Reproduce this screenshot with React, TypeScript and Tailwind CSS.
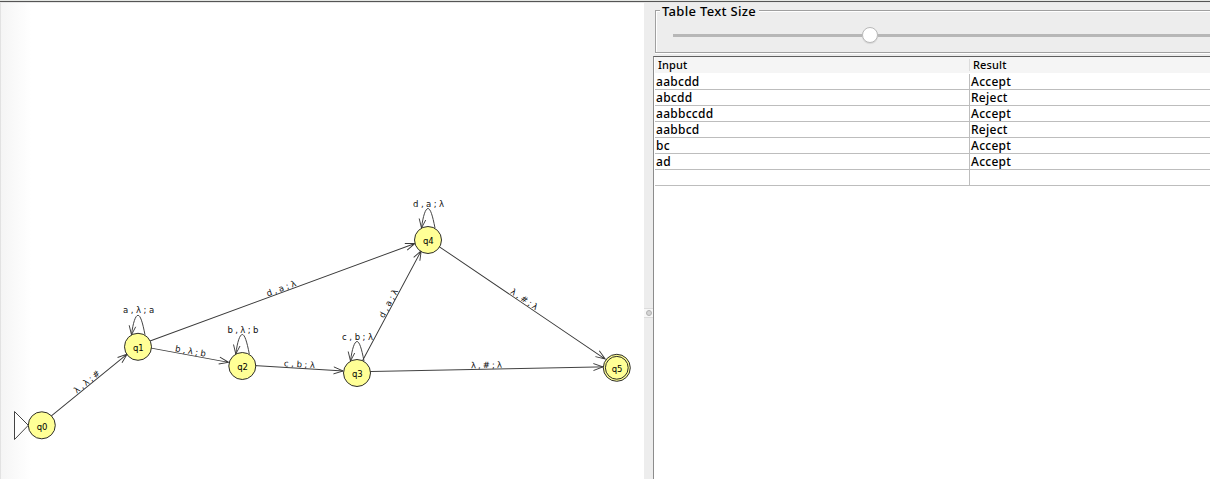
type Point = { x: number; y: number };
type StateNode = Point & { name: string; final?: boolean; loop?: string };

const R = 13.5;

const states: Record<string, StateNode> = {
  q0: { name: "q0", x: 41.8, y: 425.3 },
  q1: { name: "q1", x: 138, y: 346.8, loop: "a , λ ; a" },
  q2: { name: "q2", x: 242.3, y: 366, loop: "b , λ ; b" },
  q3: { name: "q3", x: 357, y: 373, loop: "c , b ; λ" },
  q4: { name: "q4", x: 428, y: 240, loop: "d , a ; λ" },
  q5: { name: "q5", x: 616.8, y: 367.8, final: true },
};

const edges = [
  { from: "q0", to: "q1", label: "λ , λ ; #" },
  { from: "q1", to: "q2", label: "b , λ ; b" },
  { from: "q2", to: "q3", label: "c , b ; λ" },
  { from: "q1", to: "q4", label: "d , a ; λ" },
  { from: "q3", to: "q4", label: "d , a ; λ" },
  { from: "q4", to: "q5", label: "λ , # ; λ" },
  { from: "q3", to: "q5", label: "λ , # ; λ" },
];

const rows = [
  ["aabcdd", "Accept"],
  ["abcdd", "Reject"],
  ["aabbccdd", "Accept"],
  ["aabbcd", "Reject"],
  ["bc", "Accept"],
  ["ad", "Accept"],
  ["", ""],
];

function Label({ text }: { text: string }) {
  return (
    <text textAnchor="middle" fontSize="8.5" wordSpacing="0.8" textLength="31" fill="#111" stroke="none">
      {text}
    </text>
  );
}

function Edge({ a, b, label }: { a: Point; b: Point; label: string }) {
  const angle = (Math.atan2(b.y - a.y, b.x - a.x) * 180) / Math.PI;
  const length = Math.hypot(b.x - a.x, b.y - a.y);
  const end = length - R;
  return (
    <g transform={`translate(${a.x - 0.4} ${a.y - 1.2}) rotate(${angle})`}>
      <path d={`M${R - 1} 0H${end}M${end - 9.5} -3.5L${end} 0L${end - 9.5} 3.5`} />
      <g transform={`translate(${length / 2} -1.2)`}>
        <Label text={label} />
      </g>
    </g>
  );
}

function State({ s }: { s: StateNode }) {
  return (
    <g transform={`translate(${s.x} ${s.y})`}>
      {s.loop && (
        <>
          <path d="M7 -12C4.5 -25 2.3 -31.5 0 -31.5C-2.5 -31.5 -5 -24 -6.5 -12M-8.8 -21.5L-6.5 -12L-2.3 -20" />
          <g transform="translate(0.6 -33.4)">
            <Label text={s.loop} />
          </g>
        </>
      )}
      <circle r={R} fill="#ffff96" stroke="#222" />
      {s.final && <circle r="11.4" fill="none" stroke="#222" />}
      <text textAnchor="middle" x="0.3" y="4.2" fontSize="8.5" textLength="10.8" fill="#000" stroke="none">
        {s.name}
      </text>
    </g>
  );
}

function Automaton() {
  return (
    <svg
      className="block h-[476px] w-[643px]"
      viewBox="1 3 643 476"
      fontFamily="'DejaVu Sans', sans-serif"
      fill="none"
      stroke="#3a3a3a"
      strokeWidth="0.95"
    >
      {edges.map((e) => (
        <Edge key={e.from + e.to} a={states[e.from]} b={states[e.to]} label={e.label} />
      ))}
      <path d="M14.5 411.5V439.5L28.3 425.3Z" fill="#fff" />
      {Object.values(states).map((s) => (
        <State key={s.name} s={s} />
      ))}
    </svg>
  );
}

function TextSizePanel() {
  return (
    <div className="h-[53px] pt-[7px] pl-0.5">
      <div className="h-[43px] border-y border-l border-[#a0a0a0] shadow-[inset_1px_1px_0_#fff,0_1px_0_#fff]">
        <div className="-mt-[7px] ml-1 flex h-4 w-[99px] items-center bg-[#ededed] pl-0.5 text-[13px] font-medium whitespace-pre">
          <span className="tracking-[0.31px]">Table Text Size</span>
        </div>
        <div className="mt-[7px] ml-[17px] flex h-4 items-center">
          <div className="h-[3px] w-[189px] bg-[#b7b7b7]" />
          <div className="size-4 rounded-full border border-[#b8b8b8] bg-white shadow-[0_1px_1px_#00000018]" />
          <div className="h-[3px] flex-1 bg-[#b7b7b7]" />
        </div>
      </div>
    </div>
  );
}

function ResultsTable() {
  return (
    <div className="flex-1 border-t border-l border-t-[#606060] border-l-[#8c8c8c] bg-white pl-px">
      <div className="mb-px flex h-4 items-center bg-[#f5f5f5] text-[11px] font-medium tracking-[0.15px]">
        <div className="w-[314px] pl-[3px]">Input</div>
        <div className="flex h-3 flex-1 items-center border-l border-[#dcdcdc] pl-[3px]">Result</div>
      </div>
      {rows.map(([input, result], i) => (
        <div key={i} className="flex h-4 border-b border-[#bdbdbd] text-[12px] leading-[16px] font-medium tracking-[0.27px]">
          <div className="w-[314px] pl-px">{input}</div>
          <div className="flex-1 border-l border-[#bdbdbd] pl-px">{result}</div>
        </div>
      ))}
    </div>
  );
}

export default function App() {
  return (
    <div className="flex h-[479px] w-[1210px] flex-col overflow-hidden bg-[#ededed] font-['Noto_Sans','Open_Sans',sans-serif] text-black">
      <div className="h-[3px] shrink-0 border-t border-b border-t-[#e4e6e3] border-b-[#e6e6e6] bg-[#555]" />
      <div className="flex min-h-0 flex-1">
        <div className="w-[644px] border-l border-[#e2e2e2] bg-[linear-gradient(to_right,#f5f5f5,#fff_30px)]">
          <Automaton />
        </div>
        <div className="flex w-[9px] flex-col justify-start pt-[305px]">
          <div className="flex h-[10px] items-center justify-center border-y border-[#dcdcdc] bg-[#f7f7f7]">
            <div className="size-1.5 rounded-full border border-[#b0b0b0] bg-[#d5d5d5]" />
          </div>
        </div>
        <div className="flex min-w-0 flex-1 flex-col">
          <TextSizePanel />
          <ResultsTable />
        </div>
      </div>
    </div>
  );
}
